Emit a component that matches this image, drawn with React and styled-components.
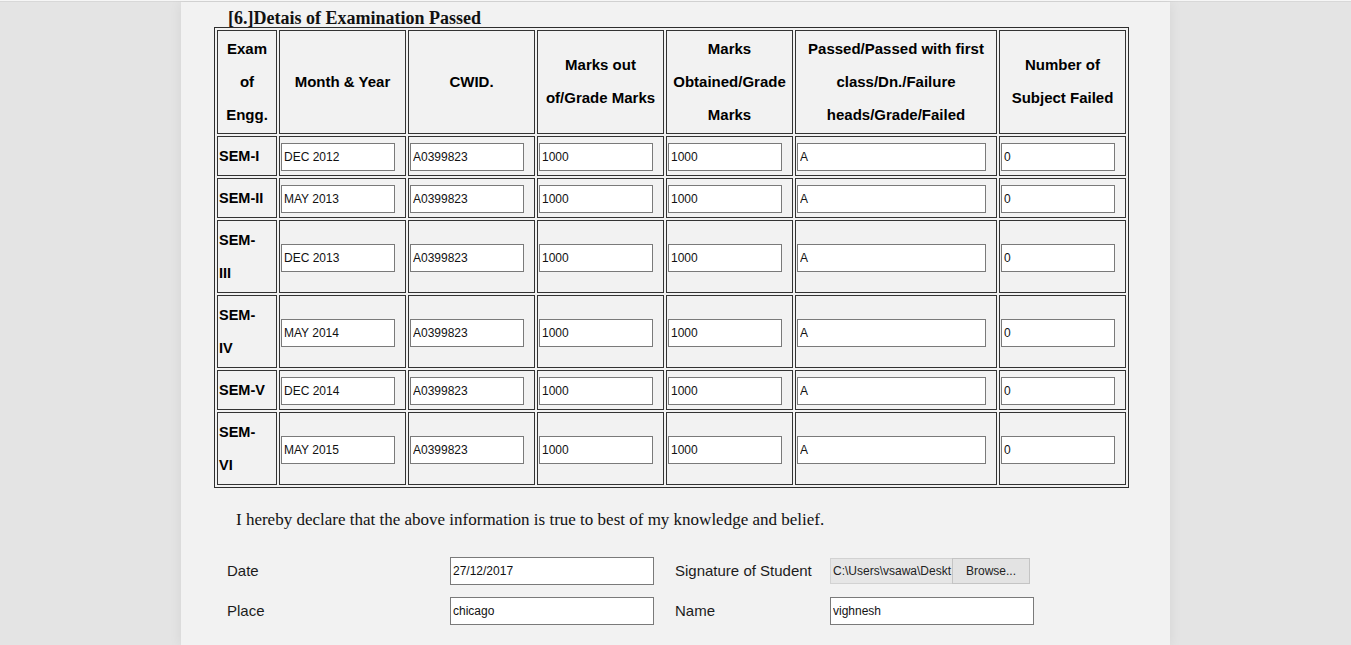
import React from 'react';
import styled, { createGlobalStyle } from 'styled-components';

const GlobalStyle = createGlobalStyle`
  html, body { margin: 0; padding: 0; overflow: hidden; }
  body {
    background: #e4e4e4;
    border-top: 1px solid #f6f6f6;
    font-family: "Liberation Sans", Arial, sans-serif;
  }
`;

const Page = styled.div`
  border-top: 1px solid #d8d8d8;
  min-height: 100vh;
  background: #e4e4e4;
`;

const Panel = styled.main`
  box-sizing: border-box;
  width: 989px;
  min-height: 100vh;
  margin: 0 auto;
  padding-top: 7px;
  background: #f2f2f2;
  box-shadow: 0 0 12px rgba(0, 0, 0, 0.07);
`;

const Title = styled.h3`
  margin: 0 0 0 47px;
  font-family: "Liberation Serif", "Times New Roman", serif;
  font-size: 18px;
  font-weight: bold;
  line-height: 18px;
  color: #111;
`;

const ExamTable = styled.table`
  margin-left: 33px;
  width: 915px;
  table-layout: fixed;
  border-collapse: separate;
  border-spacing: 2px;
  border: 1px solid #2e2e2e;
  color: #000;
  font-family: "Liberation Sans", Arial, sans-serif;
`;

const Row = styled.tr`
  height: ${(p) => p.$h}px;
`;

const HeadCell = styled.th`
  box-sizing: border-box;
  width: ${(p) => p.$w}px;
  border: 1px solid #333;
  padding: 0 1px 2px;
  font-size: 15px;
  font-weight: bold;
  line-height: 33px;
  text-align: center;
  vertical-align: middle;
`;

const LabelCell = styled.td`
  border: 1px solid #333;
  padding: 1px 10px 1px 1px;
  font-size: 14.5px;
  font-weight: bold;
  line-height: 33px;
  text-align: left;
  vertical-align: middle;
`;

const FieldCell = styled.td`
  border: 1px solid #333;
  padding: 2px 1px 0 1px;
  vertical-align: middle;
`;

const CellInput = styled.input`
  display: block;
  box-sizing: border-box;
  width: ${(p) => p.$w}px;
  height: 28px;
  margin: 0;
  padding: 0 2px;
  border: 1px solid #7a7a7a;
  border-radius: 0;
  background: #fff;
  color: #111;
  font-family: "Liberation Sans", Arial, sans-serif;
  font-size: 12px;
  outline: none;
`;

const Declaration = styled.p`
  margin: 22px 0 0 55px;
  font-family: "Liberation Serif", "Times New Roman", serif;
  font-size: 17px;
  line-height: 19px;
  color: #111;
`;

const SignGrid = styled.div`
  display: grid;
  grid-template-columns: 223px 225px 155px auto;
  grid-auto-rows: 28px;
  row-gap: 12px;
  align-items: center;
  margin: 28px 0 0 46px;
`;

const FormLabel = styled.span`
  font-family: "Liberation Sans", Arial, sans-serif;
  font-size: 15px;
  line-height: 26px;
  color: #1c1c1c;
`;

const FormInput = styled(CellInput)`
  width: 204px;
`;

const FileField = styled.div`
  display: flex;
  width: 200px;
  height: 26px;
  font-family: "Liberation Sans", Arial, sans-serif;
  font-size: 12px;
  color: #222;
`;

const FilePath = styled.span`
  box-sizing: border-box;
  width: 122px;
  height: 26px;
  padding: 0 0 0 2px;
  line-height: 24px;
  border: 1px solid #d2d2d2;
  border-right: none;
  background: #e6e6e6;
  white-space: nowrap;
  overflow: hidden;
`;

const BrowseButton = styled.button`
  box-sizing: border-box;
  width: 78px;
  height: 26px;
  margin: 0;
  padding: 0;
  border: 1px solid #c4c4c4;
  background: #e3e3e3;
  color: #222;
  font-family: "Liberation Sans", Arial, sans-serif;
  font-size: 12px;
`;

const headers = [
  { w: 60, text: 'Exam of Engg.' },
  { w: 127, text: 'Month & Year' },
  { w: 127, text: 'CWID.' },
  { w: 127, text: 'Marks out of/Grade Marks' },
  { w: 127, text: 'Marks Obtained/Grade Marks' },
  { w: 202, text: 'Passed/Passed with first class/Dn./Failure heads/Grade/Failed' },
  { w: 127, text: 'Number of Subject Failed' },
];

const rows = [
  { sem: 'SEM-I', date: 'DEC 2012', h: 40 },
  { sem: 'SEM-II', date: 'MAY 2013', h: 40 },
  { sem: 'SEM-III', date: 'DEC 2013', h: 73 },
  { sem: 'SEM-IV', date: 'MAY 2014', h: 73 },
  { sem: 'SEM-V', date: 'DEC 2014', h: 40 },
  { sem: 'SEM-VI', date: 'MAY 2015', h: 73 },
];

export default function App() {
  return (
    <>
      <GlobalStyle />
      <Page>
        <Panel>
          <Title>[6.]Detais of Examination Passed</Title>
          <ExamTable>
            <thead>
              <Row $h={104}>
                {headers.map((h) => (
                  <HeadCell key={h.text} $w={h.w}>
                    {h.text}
                  </HeadCell>
                ))}
              </Row>
            </thead>
            <tbody>
              {rows.map((r) => (
                <Row key={r.sem} $h={r.h}>
                  <LabelCell>{r.sem}</LabelCell>
                  <FieldCell>
                    <CellInput $w={114} defaultValue={r.date} />
                  </FieldCell>
                  <FieldCell>
                    <CellInput $w={114} defaultValue="A0399823" />
                  </FieldCell>
                  <FieldCell>
                    <CellInput $w={114} defaultValue="1000" />
                  </FieldCell>
                  <FieldCell>
                    <CellInput $w={114} defaultValue="1000" />
                  </FieldCell>
                  <FieldCell>
                    <CellInput $w={189} defaultValue="A" />
                  </FieldCell>
                  <FieldCell>
                    <CellInput $w={114} defaultValue="0" />
                  </FieldCell>
                </Row>
              ))}
            </tbody>
          </ExamTable>
          <Declaration>
            I hereby declare that the above information is true to best of my knowledge and belief.
          </Declaration>
          <SignGrid>
            <FormLabel>Date</FormLabel>
            <FormInput defaultValue="27/12/2017" />
            <FormLabel>Signature of Student</FormLabel>
            <FileField>
              <FilePath>{'C:\\Users\\vsawa\\Deskt'}</FilePath>
              <BrowseButton type="button">Browse...</BrowseButton>
            </FileField>
            <FormLabel>Place</FormLabel>
            <FormInput defaultValue="chicago" />
            <FormLabel>Name</FormLabel>
            <FormInput defaultValue="vighnesh" />
          </SignGrid>
        </Panel>
      </Page>
    </>
  );
}
